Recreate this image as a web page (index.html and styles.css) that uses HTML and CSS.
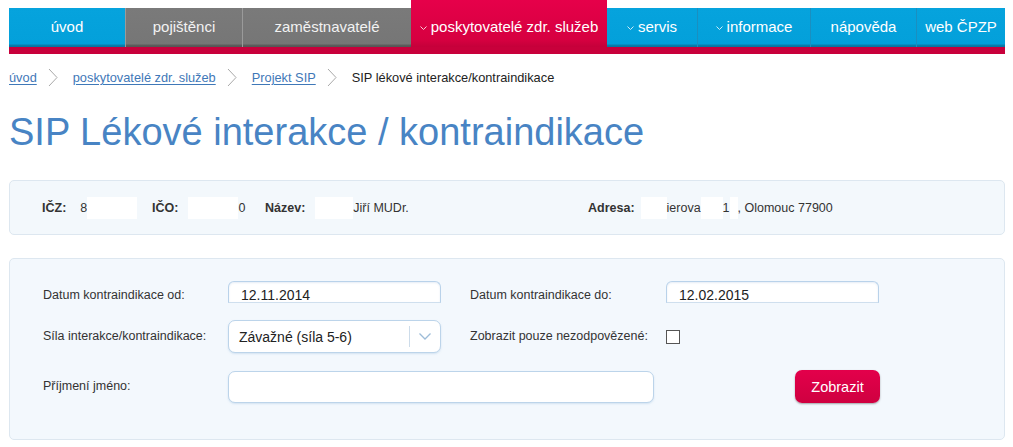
FILE: index.html
```html
<!DOCTYPE html>
<html lang="cs">
<head>
<meta charset="utf-8">
<title>SIP Lékové interakce / kontraindikace</title>
<link rel="stylesheet" href="styles.css">
</head>
<body>
<div class="page">
  <nav class="topnav">
    <a class="tab tab-blue">úvod</a>
    <a class="tab tab-gray">pojištěnci</a>
    <a class="tab tab-gray">zaměstnavatelé</a>
    <a class="tab tab-red"><svg class="caret" viewBox="0 0 7 4" width="7" height="4"><polyline points="0.5,0.5 3.5,3.5 6.5,0.5"/></svg>poskytovatelé zdr. služeb</a>
    <a class="tab tab-blue"><svg class="caret" viewBox="0 0 7 4" width="7" height="4"><polyline points="0.5,0.5 3.5,3.5 6.5,0.5"/></svg>servis</a>
    <a class="tab tab-blue"><svg class="caret" viewBox="0 0 7 4" width="7" height="4"><polyline points="0.5,0.5 3.5,3.5 6.5,0.5"/></svg>informace</a>
    <a class="tab tab-blue">nápověda</a>
    <a class="tab tab-blue">web ČPZP</a>
  </nav>
  <div class="navline"></div>

  <div class="breadcrumb">
    <a class="crumb">úvod</a>
    <svg class="sep" viewBox="0 0 10 19" width="10" height="19"><polyline points="1,1 9,9.5 1,18"/></svg>
    <a class="crumb">poskytovatelé zdr. služeb</a>
    <svg class="sep" viewBox="0 0 10 19" width="10" height="19"><polyline points="1,1 9,9.5 1,18"/></svg>
    <a class="crumb">Projekt SIP</a>
    <svg class="sep" viewBox="0 0 10 19" width="10" height="19"><polyline points="1,1 9,9.5 1,18"/></svg>
    <span class="current">SIP lékové interakce/kontraindikace</span>
  </div>

  <h1 class="title">SIP Lékové interakce / kontraindikace</h1>

  <div class="infobox">
    <div class="info-item w-icz"><b>IČZ:</b><span class="val v-first">8<i class="redact r-icz"></i></span></div>
    <div class="info-item w-ico"><b>IČO:</b><span class="val"><i class="redact r-ico"></i>0</span></div>
    <div class="info-item w-naz"><b>Název:</b><span class="val"><i class="redact r-naz"></i>Jiří MUDr.</span></div>
    <div class="info-item"><b>Adresa:</b><span class="val v-adr"><i class="redact r-a1"></i>ierova<i class="redact r-a2"></i>1<i class="redact r-a3"></i>, Olomouc 77900</span></div>
  </div>

  <form class="filter">
    <label class="lbl lbl-low">Datum kontraindikace od:</label>
    <div class="date-input">12.11.2014</div>
    <label class="lbl lbl-low">Datum kontraindikace do:</label>
    <div class="date-input">12.02.2015</div>

    <label class="lbl">Síla interakce/kontraindikace:</label>
    <div class="select">
      <span class="select-text">Závažné (síla 5-6)</span>
      <span class="select-btn"><svg viewBox="0 0 12 7" width="12" height="7"><polyline points="0.5,0.5 6,6 11.5,0.5"/></svg></span>
    </div>
    <label class="lbl">Zobrazit pouze nezodpovězené:</label>
    <span class="checkbox"></span>

    <label class="lbl">Příjmení jméno:</label>
    <div class="text-input"></div>
    <button type="button" class="btn">Zobrazit</button>
  </form>
</div>
</body>
</html>
```

FILE: styles.css
```css
* { box-sizing: border-box; }

html, body {
  margin: 0;
  padding: 0;
  background: #ffffff;
}

body {
  font-family: "Liberation Sans", Arial, sans-serif;
  color: #333333;
}

.page {
  padding: 0 8px 0 9px;
}

/* ---------- top navigation ---------- */
.topnav {
  display: grid;
  grid-template-columns: 116px 117px 169px 196px 90px 113px 106px 89px;
  padding-top: 8px;
  height: 47px;
}

.tab {
  display: flex;
  align-items: center;
  justify-content: center;
  height: 39px;
  padding-bottom: 3px;
  font-size: 15px;
  color: #ffffff;
  text-decoration: none;
  white-space: nowrap;
  border-left: 1px solid rgba(255, 255, 255, 0.18);
}

.tab:first-child { border-left: none; }

.tab-blue {
  background: linear-gradient(to bottom, #06a3dd 0, #03a0da 36px, #0a7fae 37px, #07739e 39px);
  border-left-color: #1a8fc0;
}

.tab-gray {
  background: linear-gradient(to bottom, #7a7a7a 0, #767676 36px, #5d5d5d 37px, #555555 39px);
  color: #f2f2f2;
  border-left-color: #9a9a9a;
}

.tab-red {
  margin-top: -8px;
  height: 47px;
  padding-top: 8px;
  background: linear-gradient(to bottom, #e6004a 0, #d60040 40px, #c4003a 47px);
  border-left: none;
}

.tab-red + .tab { border-left: none; }

.caret {
  margin-right: 4px;
  margin-top: 4px;
  fill: none;
  stroke: #ffffff;
  stroke-width: 1;
  opacity: 0.8;
}

.navline {
  height: 7px;
  background: #c8003b;
}

/* ---------- breadcrumb ---------- */
.breadcrumb {
  display: flex;
  align-items: center;
  margin-top: 14px;
  height: 19px;
  font-size: 12.8px;
}

.crumb {
  color: #3f78b8;
  text-decoration: underline;
  text-underline-offset: 2px;
}

.sep {
  margin: 0 15px 0 11px;
  fill: none;
  stroke: #a9a9a9;
  stroke-width: 1;
}

.current { color: #222222; }

/* ---------- title ---------- */
.title {
  margin: 23px 0 0;
  font-size: 38px;
  line-height: 44px;
  font-weight: normal;
  color: #4884c4;
}

/* ---------- info box ---------- */
.infobox {
  display: flex;
  align-items: center;
  margin-top: 26px;
  height: 55px;
  padding-left: 32px;
  background: #f3f8fc;
  border: 1px solid #dde7f0;
  border-radius: 5px;
  font-size: 12.5px;
  color: #333333;
}

.info-item {
  display: flex;
  align-items: center;
  white-space: nowrap;
}

.info-item b { font-weight: bold; color: #333333; }

.w-icz { width: 110px; }
.w-ico { width: 113px; }
.w-naz { width: 323px; }

.val { margin-left: 10px; display: inline-flex; align-items: center; }
.v-first { margin-left: 14px; }
.v-adr { margin-left: 6px; }

.redact {
  display: inline-block;
  height: 22px;
  background: #ffffff;
}
.r-icz { width: 50px; }
.r-ico { width: 50px; }
.r-naz { width: 38px; }
.r-a1 { width: 26px; }
.r-a2 { width: 22px; }
.r-a3 { width: 8px; }

/* ---------- filter form ---------- */
.filter {
  display: grid;
  grid-template-columns: 185px 242px 196px 214px;
  grid-template-rows: 22px 33px 33px;
  row-gap: 17px;
  align-items: center;
  margin-top: 23px;
  height: 182px;
  padding: 22px 0 0 33px;
  background: #f3f8fd;
  border: 1px solid #dde7f0;
  border-radius: 5px;
  font-size: 12.5px;
}

.lbl {
  color: #333333;
  line-height: 15px;
  white-space: nowrap;
}

.lbl-low { align-self: end; }

.date-input {
  width: 213px;
  height: 22px;
  padding: 6px 0 0 12px;
  font-size: 14px;
  line-height: 14px;
  color: #222222;
  background: #ffffff;
  border: 1px solid #b9d2ea;
  border-bottom-color: #cfdfee;
  border-radius: 6px 6px 0 0;
  box-shadow: inset 0 1px 2px rgba(150, 185, 220, 0.25);
  overflow: hidden;
}

.select {
  display: flex;
  align-items: center;
  width: 213px;
  height: 33px;
  background: #ffffff;
  border: 1px solid #bcd4ea;
  border-radius: 7px;
  box-shadow: 0 1px 2px rgba(150, 185, 220, 0.35);
}

.select-text {
  flex: 1;
  padding-left: 10px;
  font-size: 14px;
  color: #222222;
}

.select-btn {
  display: flex;
  align-items: center;
  justify-content: center;
  width: 31px;
  height: 21px;
  border-left: 1px solid #cddcea;
}

.select-btn svg {
  fill: none;
  stroke: #9dbcd8;
  stroke-width: 1.3;
}

.checkbox {
  width: 14px;
  height: 14px;
  background: #ffffff;
  border: 1px solid #555555;
}

.text-input {
  grid-column: 2 / 4;
  width: 426px;
  height: 32px;
  background: #ffffff;
  border: 1px solid #bcd4ea;
  border-radius: 7px;
  box-shadow: 0 1px 2px rgba(150, 185, 220, 0.35);
}

.btn {
  justify-self: end;
  width: 85px;
  height: 33px;
  padding: 0;
  font-family: "Liberation Sans", Arial, sans-serif;
  font-size: 14.5px;
  color: #ffffff;
  background: linear-gradient(to bottom, #e3004b 0, #cf0040 100%);
  border: none;
  border-radius: 7px;
  box-shadow: 0 1px 2px rgba(0, 0, 0, 0.35);
}
```
